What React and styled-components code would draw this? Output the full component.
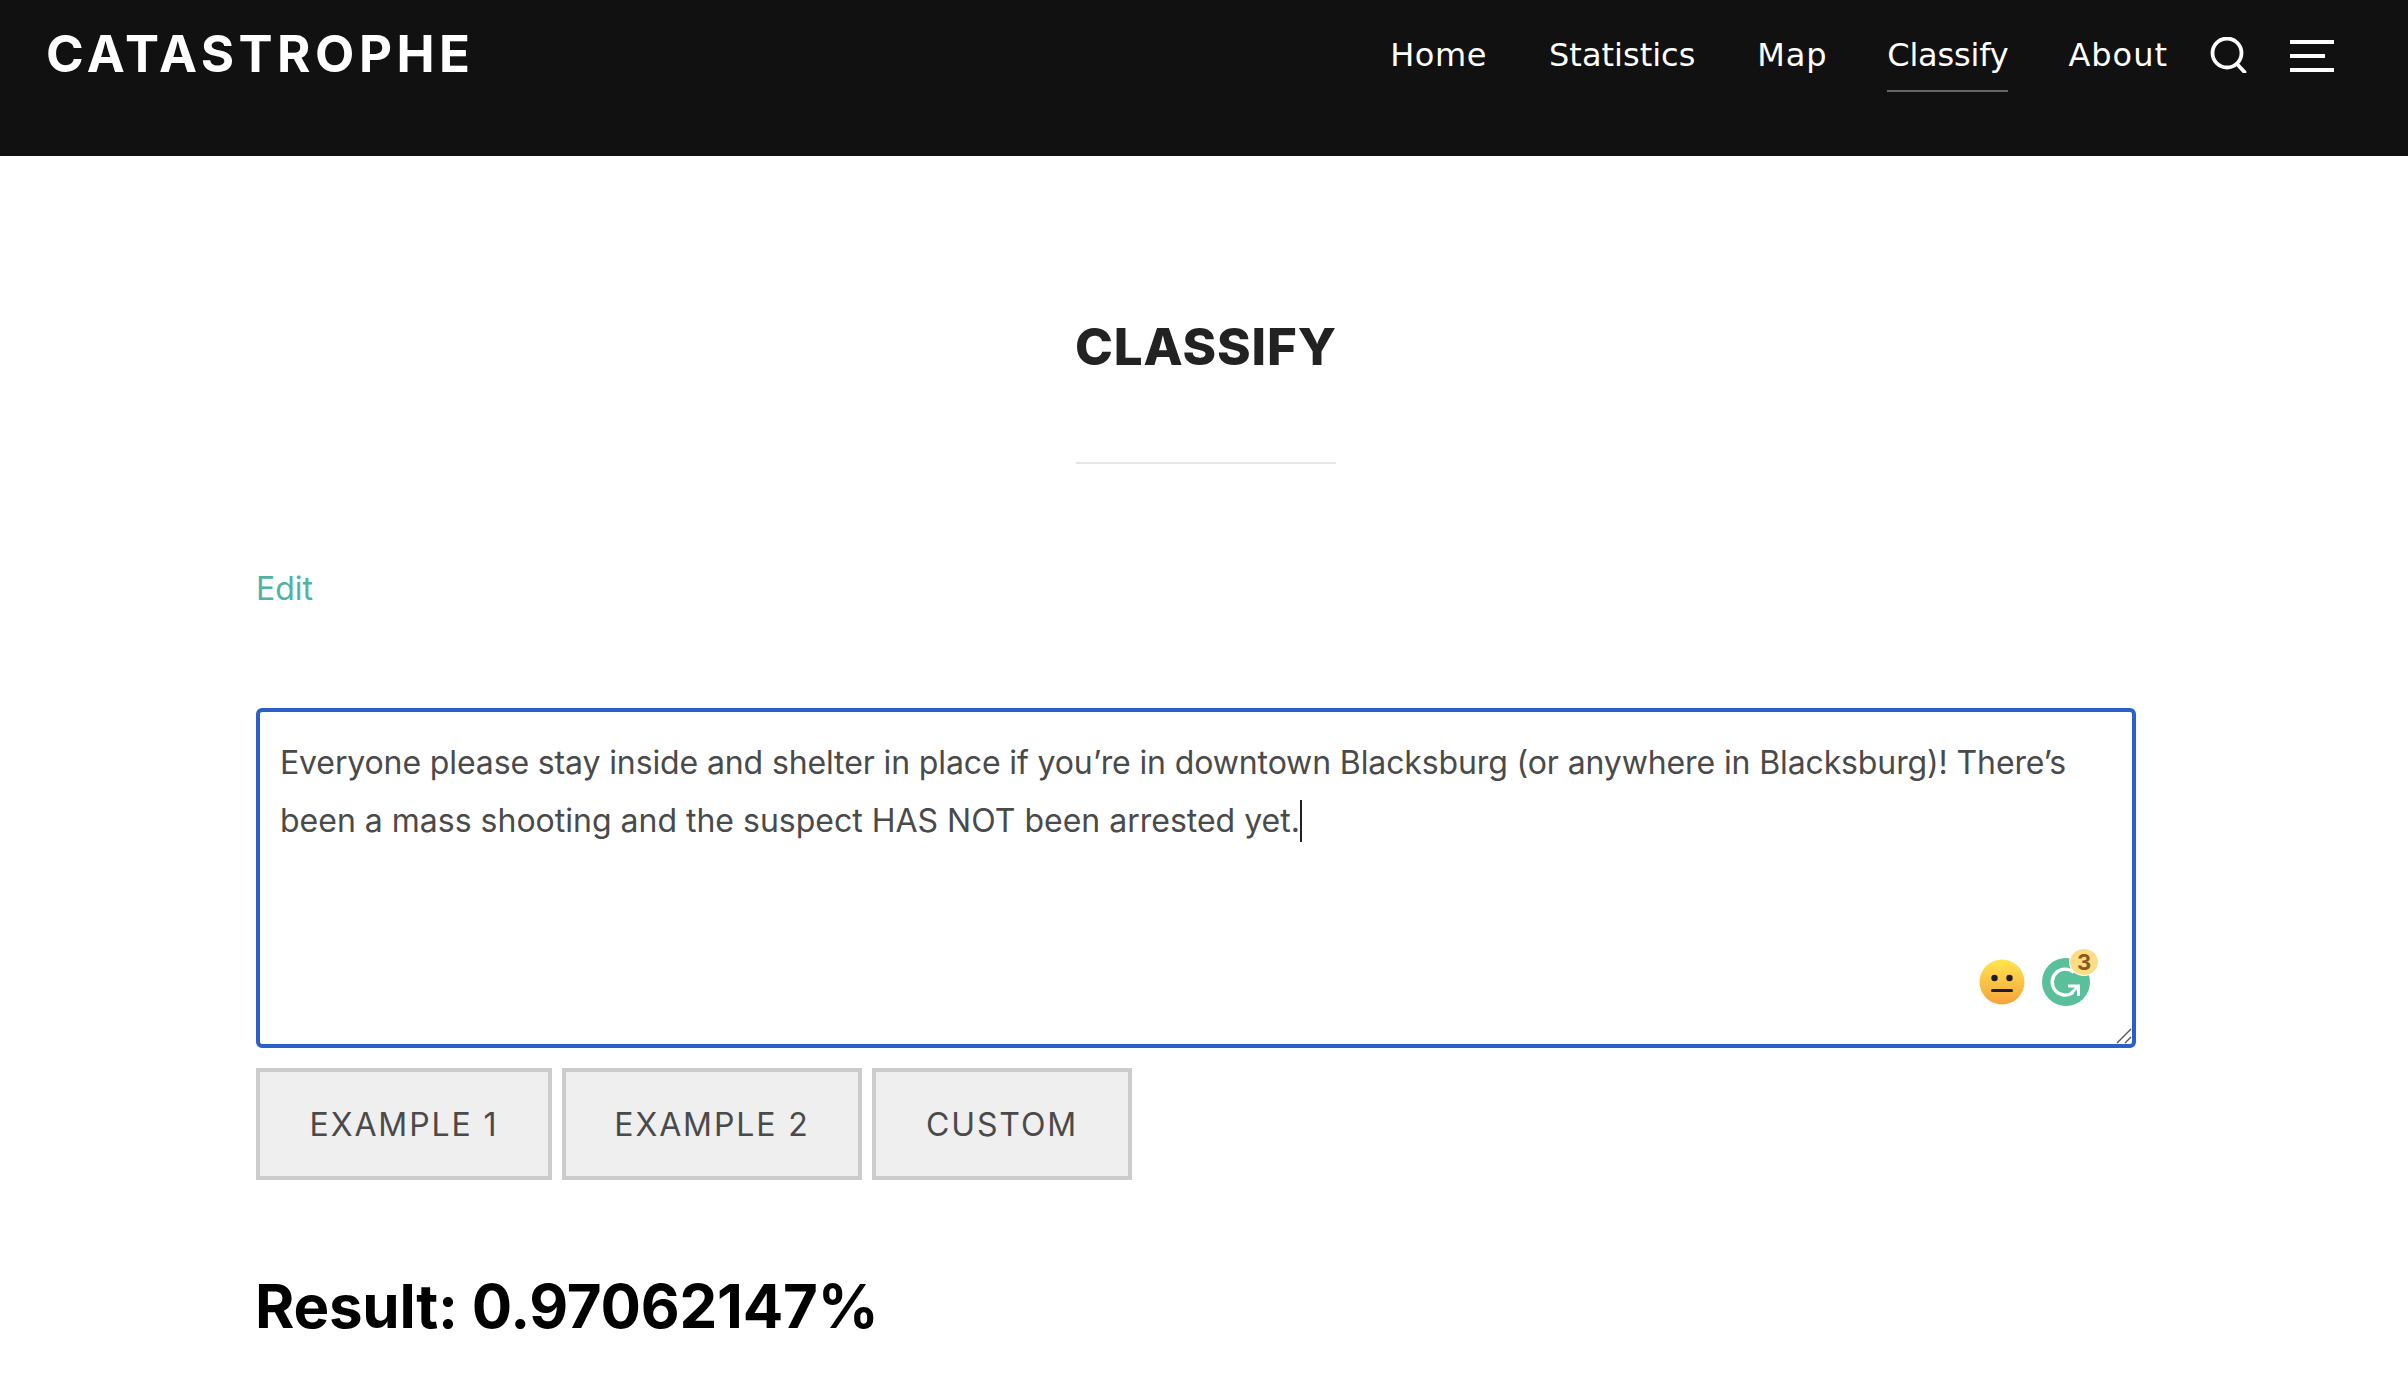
import React from "react";
import styled, { createGlobalStyle } from "styled-components";

const GlobalStyle = createGlobalStyle`
  html, body {
    margin: 0;
    padding: 0;
    background: #fff;
    font-family: "Inter", "Liberation Sans", sans-serif;
  }
  * {
    box-sizing: border-box;
  }
`;

const Page = styled.div`
  width: 2408px;
  height: 1396px;
  overflow: hidden;
`;

const Header = styled.header`
  height: 156px;
  background: #111;
  display: flex;
  justify-content: space-between;
  align-items: flex-start;
  padding: 0 74px 0 46px;
`;

const Logo = styled.a`
  margin-top: 23px;
  font-size: 51px;
  line-height: 62px;
  font-weight: 700;
  letter-spacing: 4.5px;
  color: #fff;
`;

const NavRow = styled.nav`
  display: flex;
  align-items: flex-start;
`;

const NavLink = styled.a`
  margin-right: ${(p) => p.$gap}px;
  height: 92px;
  padding-top: 35px;
  font-family: "DejaVu Sans", "Inter", sans-serif;
  font-size: 32px;
  line-height: 40px;
  letter-spacing: ${(p) => p.$spacing || 0}px;
  color: #fff;
  white-space: nowrap;
  border-bottom: 2px solid ${(p) => (p.$active ? "#666" : "transparent")};
`;

const IconSlot = styled.span`
  display: block;
  margin-top: ${(p) => p.$top}px;
  margin-right: ${(p) => p.$gap || 0}px;
  line-height: 0;
`;

const Main = styled.main`
  padding: 0 272px 0 256px;
`;

const TitleBlock = styled.div`
  display: flex;
  flex-direction: column;
  align-items: center;
  padding-left: 20px;
  margin-top: 160px;
`;

const Title = styled.h1`
  margin: 0;
  font-size: 51px;
  line-height: 62px;
  font-weight: 800;
  letter-spacing: 0.9px;
  color: #222;
`;

const Divider = styled.div`
  width: 260px;
  height: 2px;
  margin-top: 84px;
  background: #e5e5e5;
`;

const EditLink = styled.a`
  display: block;
  margin-top: 105px;
  font-size: 32px;
  line-height: 40px;
  color: #4fb3a3;
`;

const TextBox = styled.div`
  position: relative;
  margin-top: 99px;
  height: 340px;
  padding: 22px 20px;
  border: 4px solid #2b5fc9;
  border-radius: 6px;
  font-size: 32px;
  line-height: 58px;
  color: #4a4a4a;
  background: #fff;
`;

const TextLine = styled.span`
  display: block;
  white-space: nowrap;
  letter-spacing: ${(p) => p.$spacing || 0}px;
`;

const Caret = styled.span`
  display: inline-block;
  width: 2px;
  height: 42px;
  margin-bottom: -10px;
  background: #222;
`;

const Widgets = styled.div`
  position: absolute;
  right: 42px;
  bottom: 38px;
  display: flex;
  align-items: center;
  gap: 17px;
`;

const GrammarlyWrap = styled.div`
  position: relative;
  width: 48px;
  height: 48px;
  line-height: 0;
`;

const CountBadge = styled.span`
  position: absolute;
  top: -9px;
  right: -8px;
  width: 28px;
  height: 26px;
  border-radius: 50%;
  background: #fbdd85;
  box-shadow: 0 0 0 1px #fff;
  color: #8a5a1d;
  font-size: 22px;
  font-weight: 700;
  line-height: 26px;
  text-align: center;
`;

const ResizeGrip = styled.svg`
  position: absolute;
  right: 0;
  bottom: 0;
`;

const ButtonRow = styled.div`
  display: flex;
  gap: 10px;
  margin-top: 20px;
`;

const ExampleButton = styled.button`
  width: ${(p) => p.$width}px;
  height: 112px;
  padding: 0;
  border: 4px solid #ccc;
  border-radius: 0;
  background: #efefef;
  color: #4a4a4a;
  font-family: inherit;
  font-size: 32px;
  letter-spacing: 1.9px;
`;

const Result = styled.h2`
  margin: 90px 0 0 -1px;
  font-size: 60px;
  line-height: 72px;
  font-weight: 700;
  letter-spacing: -0.24px;
  color: #000;
`;

const SearchIcon = () => (
  <svg width="38" height="36" viewBox="0 0 38 36" fill="none" stroke="#fff" strokeWidth="3.8">
    <circle cx="17" cy="16" r="14.5" />
    <path d="M27 27 L34.5 35" strokeLinecap="round" />
  </svg>
);

const MenuIcon = () => (
  <svg width="44" height="32" viewBox="0 0 44 32" fill="#fff">
    <rect x="0" y="0" width="44" height="4" />
    <rect x="0" y="14" width="35" height="4" />
    <rect x="0" y="28" width="44" height="4" />
  </svg>
);

const NeutralFace = () => (
  <svg width="46" height="46" viewBox="0 0 46 46">
    <defs>
      <linearGradient id="faceFill" x1="0" y1="0" x2="0" y2="1">
        <stop offset="0" stopColor="#ffe54d" />
        <stop offset="1" stopColor="#f6a23b" />
      </linearGradient>
    </defs>
    <circle cx="23" cy="23" r="22.5" fill="url(#faceFill)" />
    <circle cx="15.5" cy="19" r="3.2" fill="#1c1c2a" />
    <circle cx="30.5" cy="19" r="3.2" fill="#1c1c2a" />
    <rect x="12" y="30" width="22" height="3" rx="1.5" fill="#1c1c2a" />
  </svg>
);

const GrammarlyLogo = () => (
  <svg width="48" height="48" viewBox="0 0 48 48">
    <circle cx="24" cy="24" r="24" fill="#5ac09c" />
    <path d="M32 14.5 A13 13 0 1 0 31 34.5" fill="none" stroke="#fff" strokeWidth="3.4" />
    <path d="M26 28 H36.5 V38 M36 28.5 L28 36.5" fill="none" stroke="#fff" strokeWidth="3" />
  </svg>
);

const navItems = [
  { label: "Home", gap: 62, spacing: 0.6 },
  { label: "Statistics", gap: 62 },
  { label: "Map", gap: 60, spacing: 0.8 },
  { label: "Classify", gap: 60, spacing: -0.2 },
  { label: "About", gap: 42, spacing: 1 },
];

const examples = [
  { label: "EXAMPLE 1", width: 296 },
  { label: "EXAMPLE 2", width: 300 },
  { label: "CUSTOM", width: 260 },
];

export default function App() {
  return (
    <Page>
      <GlobalStyle />
      <Header>
        <Logo>CATASTROPHE</Logo>
        <NavRow>
          {navItems.map((item) => (
            <NavLink
              key={item.label}
              $gap={item.gap}
              $spacing={item.spacing}
              $active={item.label === "Classify"}
            >
              {item.label}
            </NavLink>
          ))}
          <IconSlot $top={37} $gap={42}>
            <SearchIcon />
          </IconSlot>
          <IconSlot $top={40}>
            <MenuIcon />
          </IconSlot>
        </NavRow>
      </Header>
      <Main>
        <TitleBlock>
          <Title>CLASSIFY</Title>
          <Divider />
        </TitleBlock>
        <EditLink>Edit</EditLink>
        <TextBox>
          <TextLine $spacing={-0.12}>
            Everyone please stay inside and shelter in place if you’re in downtown Blacksburg (or
            anywhere in Blacksburg)! There’s
          </TextLine>
          <TextLine>
            been a mass shooting and the suspect HAS NOT been arrested yet.
            <Caret />
          </TextLine>
          <Widgets>
            <NeutralFace />
            <GrammarlyWrap>
              <GrammarlyLogo />
              <CountBadge>3</CountBadge>
            </GrammarlyWrap>
          </Widgets>
          <ResizeGrip width="16" height="16" viewBox="0 0 16 16" stroke="#555" strokeWidth="1.4">
            <path d="M1 15 L15 1 M9 15 L15 9" />
          </ResizeGrip>
        </TextBox>
        <ButtonRow>
          {examples.map((b) => (
            <ExampleButton key={b.label} $width={b.width}>
              {b.label}
            </ExampleButton>
          ))}
        </ButtonRow>
        <Result>Result: 0.97062147%</Result>
      </Main>
    </Page>
  );
}
